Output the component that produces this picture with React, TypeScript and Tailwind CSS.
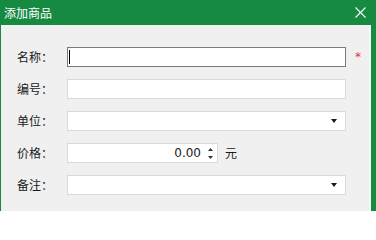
const cjk = { fontFamily: '"Noto Sans CJK SC", "Noto Sans", sans-serif' };

const Arrow = () => (
  <svg width="6" height="4" viewBox="0 0 6 4" className="shrink-0">
    <polygon points="0,0 6,0 3,4" fill="#1a1a1a" />
  </svg>
);

const Row = ({ label, children }: { label: string; children: React.ReactNode }) => (
  <div className="flex items-center h-5">
    <div className="w-[50px] text-[12px] leading-none text-[#1a1a1a]" style={cjk}>
      {label}
    </div>
    {children}
  </div>
);

const App = () => {
  return (
    <div className="w-[376px] h-[211px] bg-[#178a42] flex flex-col overflow-hidden">
      <div className="h-[25px] flex items-center justify-between pl-1 pr-[10px] shrink-0">
        <span className="text-white text-[12px] leading-none" style={cjk}>
          添加商品
        </span>
        <svg width="11" height="11" viewBox="0 0 11 11">
          <path d="M0.5 0.5 L10.5 10.5 M10.5 0.5 L0.5 10.5" stroke="#ffffff" strokeWidth="1.1" />
        </svg>
      </div>
      <div className="flex-1 ml-px mr-[5px] bg-[#f0f0f0] border-r-2 border-[#f6f6f6] pl-4 pt-[22px] flex flex-col gap-3">
        <Row label="名称：">
          <div className="w-[279px] h-5 bg-white border border-[#7a7a7a] flex items-center pl-[1px]">
            <div className="w-px h-[14px] bg-black" />
          </div>
          <span className="ml-[9px] text-[#e0334a] text-[12px] leading-none" style={{ fontFamily: '"DejaVu Sans", sans-serif' }}>
            *
          </span>
        </Row>
        <Row label="编号：">
          <div className="w-[279px] h-5 bg-white border border-[#d9d9d9]" />
        </Row>
        <Row label="单位：">
          <div className="w-[279px] h-5 bg-white border border-[#d9d9d9] flex items-center justify-end pr-[8px]">
            <Arrow />
          </div>
        </Row>
        <Row label="价格：">
          <div className="w-[151px] h-5 bg-white border border-[#d9d9d9] flex items-center justify-end">
            <span className="text-[12px] leading-none text-[#1a1a1a] mr-[4px]" style={{ fontFamily: '"DejaVu Sans", sans-serif' }}>
              0.00
            </span>
            <div className="w-[10px] h-full flex flex-col items-center justify-center gap-[5px] mr-[2px]">
              <svg width="5" height="3" viewBox="0 0 5 3">
                <polygon points="0,3 5,3 2.5,0" fill="#333333" />
              </svg>
              <svg width="5" height="3" viewBox="0 0 5 3">
                <polygon points="0,0 5,0 2.5,3" fill="#333333" />
              </svg>
            </div>
          </div>
          <span className="ml-[7px] text-[12px] leading-none text-[#1a1a1a]" style={cjk}>
            元
          </span>
        </Row>
        <Row label="备注：">
          <div className="w-[279px] h-5 bg-white border border-[#d9d9d9] flex items-center justify-end pr-[8px]">
            <Arrow />
          </div>
        </Row>
      </div>
    </div>
  );
};

export default App;
